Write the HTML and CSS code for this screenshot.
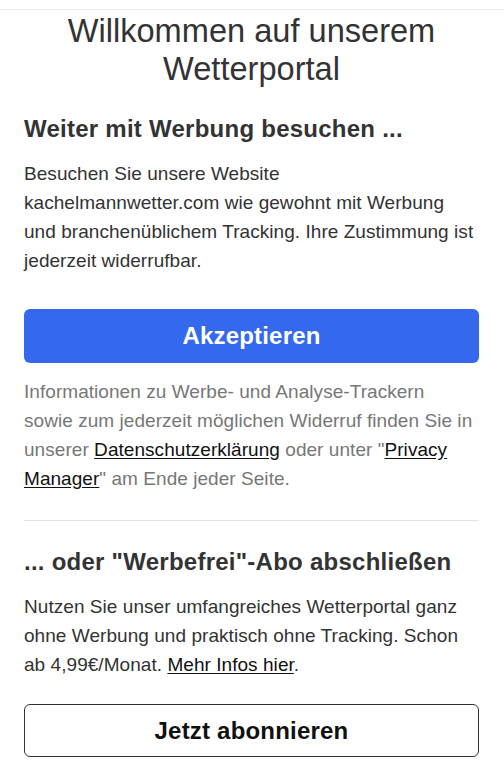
FILE: index.html
```html
<!DOCTYPE html>
<html lang="de">
<head>
<meta charset="utf-8">
<title>Willkommen</title>
<link rel="stylesheet" href="styles.css">
</head>
<body>
<div class="topbar"></div>
<main class="content">
  <h1 class="title">Willkommen auf unserem Wetterportal</h1>
  <section class="block">
    <h2 class="heading">Weiter mit Werbung besuchen ...</h2>
    <p class="text">Besuchen Sie unsere Website kachelmannwetter.com wie gewohnt mit Werbung und branchenüblichem Tracking. Ihre Zustimmung ist jederzeit widerrufbar.</p>
    <button class="btn btn-primary">Akzeptieren</button>
    <p class="text info">Informationen zu Werbe- und Analyse-Trackern sowie zum jederzeit möglichen Widerruf finden Sie in unserer <a class="link" href="#">Datenschutzerklärung</a> oder unter "<a class="link" href="#">Privacy Manager</a>" am Ende jeder Seite.</p>
  </section>
  <hr class="divider">
  <section class="block">
    <h2 class="heading heading-2">... oder "Werbefrei"-Abo abschließen</h2>
    <p class="text">Nutzen Sie unser umfangreiches Wetterportal ganz ohne Werbung und praktisch ohne Tracking. Schon ab 4,99€/Monat. <a class="link" href="#">Mehr Infos hier</a>.</p>
    <button class="btn btn-outline">Jetzt abonnieren</button>
  </section>
</main>
</body>
</html>
```
FILE: styles.css
```css
html, body {
  margin: 0;
  padding: 0;
  background: #ffffff;
}
body {
  font-family: "Liberation Sans", Arial, Helvetica, sans-serif;
  color: #333333;
  width: 504px;
  overflow: hidden;
}
.topbar {
  height: 9px;
  border-bottom: 1px solid #ececec;
}
.content {
  padding: 2px 25px 0 24px;
  display: flex;
  flex-direction: column;
}
.title {
  margin: 0;
  font-size: 32.6px;
  line-height: 38px;
  font-weight: normal;
  text-align: center;
  color: #333333;
}
.block {
  display: flex;
  flex-direction: column;
}
.heading {
  margin: 26px 0 0;
  font-size: 24px;
  line-height: 30px;
  font-weight: bold;
  letter-spacing: 0.25px;
  color: #333333;
}
.text {
  margin: 15px 0 0;
  padding-right: 3px;
  font-size: 19px;
  line-height: 29px;
  letter-spacing: 0.05px;
  color: #333333;
}
.info {
  margin-top: 14px;
  color: #777777;
}
.link {
  color: #111111;
  text-decoration: underline;
  text-underline-offset: 2px;
}
.btn {
  font-family: "Liberation Sans", Arial, Helvetica, sans-serif;
  font-size: 24px;
  font-weight: bold;
  letter-spacing: 0.2px;
  border-radius: 6px;
  width: 100%;
  cursor: pointer;
  padding: 0;
}
.btn-primary {
  margin-top: 34px;
  height: 54px;
  background: #3469ee;
  color: #ffffff;
  border: none;
}
.btn-outline {
  margin-top: 25px;
  height: 53px;
  background: #ffffff;
  color: #111111;
  border: 1.5px solid #333333;
}
.divider {
  margin: 27px 0 0;
  border: none;
  height: 1px;
  background: #e2e2e2;
}
.heading-2 {
  margin-top: 26px;
}
```
